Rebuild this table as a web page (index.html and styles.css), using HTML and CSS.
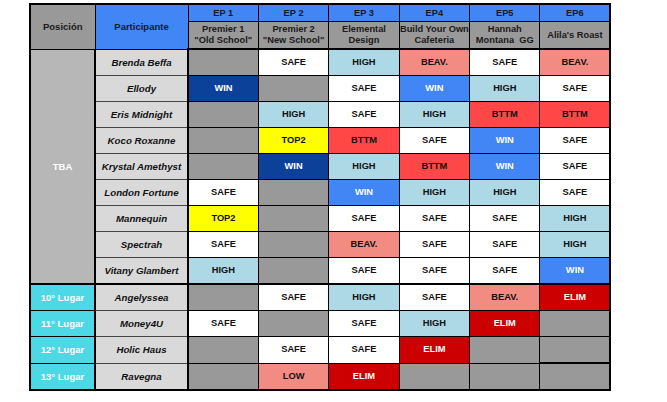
FILE: index.html
```html
<!DOCTYPE html>
<html lang="es">
<head>
<meta charset="utf-8">
<title>Tabla de progreso</title>
<link rel="stylesheet" href="styles.css">
</head>
<body>
<div class="wrap">
<table class="prog">
  <colgroup>
    <col class="c-pos"><col class="c-part"><col class="c-ep"><col class="c-ep"><col class="c-ep"><col class="c-ep"><col class="c-ep"><col class="c-ep">
  </colgroup>
  <thead>
    <tr class="h1">
      <th class="hpos" rowspan="2">Posición</th>
      <th class="hpart" rowspan="2">Participante</th>
      <th class="hep">EP 1</th>
      <th class="hep">EP 2</th>
      <th class="hep">EP 3</th>
      <th class="hep">EP4</th>
      <th class="hep">EP5</th>
      <th class="hep">EP6</th>
    </tr>
    <tr class="h2">
      <th class="htitle">Premier 1<br>"Old School"</th>
      <th class="htitle">Premier 2<br>"New School"</th>
      <th class="htitle">Elemental<br>Design</th>
      <th class="htitle">Build Your Own<br>Cafeteria</th>
      <th class="htitle">Hannah<br>Montana&nbsp; GG</th>
      <th class="htitle">Alila's Roast</th>
    </tr>
  </thead>
  <tbody>
    <tr>
      <td class="tba" rowspan="9">TBA</td>
      <td class="name">Brenda Beffa</td>
      <td class="na"></td><td class="safe">SAFE</td><td class="high">HIGH</td><td class="beav">BEAV.</td><td class="safe">SAFE</td><td class="beav">BEAV.</td>
    </tr>
    <tr>
      <td class="name">Ellody</td>
      <td class="win1">WIN</td><td class="na"></td><td class="safe">SAFE</td><td class="win">WIN</td><td class="high">HIGH</td><td class="safe">SAFE</td>
    </tr>
    <tr>
      <td class="name">Eris Midnight</td>
      <td class="na"></td><td class="high">HIGH</td><td class="safe">SAFE</td><td class="high">HIGH</td><td class="bttm">BTTM</td><td class="bttm">BTTM</td>
    </tr>
    <tr>
      <td class="name">Koco Roxanne</td>
      <td class="na"></td><td class="top2">TOP2</td><td class="bttm">BTTM</td><td class="safe">SAFE</td><td class="win">WIN</td><td class="safe">SAFE</td>
    </tr>
    <tr>
      <td class="name">Krystal Amethyst</td>
      <td class="na"></td><td class="win1">WIN</td><td class="high">HIGH</td><td class="bttm">BTTM</td><td class="win">WIN</td><td class="safe">SAFE</td>
    </tr>
    <tr>
      <td class="name">London Fortune</td>
      <td class="safe">SAFE</td><td class="na"></td><td class="win">WIN</td><td class="high">HIGH</td><td class="high">HIGH</td><td class="safe">SAFE</td>
    </tr>
    <tr>
      <td class="name">Mannequin</td>
      <td class="top2">TOP2</td><td class="na"></td><td class="safe">SAFE</td><td class="safe">SAFE</td><td class="safe">SAFE</td><td class="high">HIGH</td>
    </tr>
    <tr>
      <td class="name">Spectrah</td>
      <td class="safe">SAFE</td><td class="na"></td><td class="beav">BEAV.</td><td class="safe">SAFE</td><td class="safe">SAFE</td><td class="high">HIGH</td>
    </tr>
    <tr>
      <td class="name">Vitany Glambert</td>
      <td class="high">HIGH</td><td class="na"></td><td class="safe">SAFE</td><td class="safe">SAFE</td><td class="safe">SAFE</td><td class="win">WIN</td>
    </tr>
    <tr class="sep">
      <td class="place">10° Lugar</td>
      <td class="name">Angelyssea</td>
      <td class="na"></td><td class="safe">SAFE</td><td class="high">HIGH</td><td class="safe">SAFE</td><td class="beav">BEAV.</td><td class="elim">ELIM</td>
    </tr>
    <tr>
      <td class="place">11° Lugar</td>
      <td class="name">Money4U</td>
      <td class="safe">SAFE</td><td class="na"></td><td class="safe">SAFE</td><td class="high">HIGH</td><td class="elim">ELIM</td><td class="na"></td>
    </tr>
    <tr>
      <td class="place">12° Lugar</td>
      <td class="name">Holic Haus</td>
      <td class="na"></td><td class="safe">SAFE</td><td class="safe">SAFE</td><td class="elim">ELIM</td><td class="na"></td><td class="na thick-b"></td>
    </tr>
    <tr>
      <td class="place">13° Lugar</td>
      <td class="name">Ravegna</td>
      <td class="na"></td><td class="low">LOW</td><td class="elim">ELIM</td><td class="na"></td><td class="na"></td><td class="na"></td>
    </tr>
  </tbody>
</table>
</div>
</body>
</html>
```

FILE: styles.css
```css
html, body {
  margin: 0;
  padding: 0;
  background: #ffffff;
}

.wrap {
  padding: 3px 0 0 29px;
}

.prog {
  border-collapse: collapse;
  table-layout: fixed;
  border: 2px solid #000;
  font-family: "Liberation Sans", Arial, sans-serif;
  font-weight: bold;
  font-size: 9.3px;
  color: #111;
}

.c-pos { width: 65px; }
.c-part { width: 93px; }
.c-ep { width: 70.4px; }

.prog th,
.prog td {
  padding: 0;
  text-align: center;
  vertical-align: middle;
  border: 1px solid #000;
  line-height: 11px;
}

.h1 th.hep {
  height: 16px;
  background: #4285f4;
  border-bottom: 1px dotted #000;
  color: #1a1a1a;
}

.h2 th {
  height: 26px;
  background: #999999;
  color: #1a1a1a;
  border-bottom: 2px solid #000;
}

.hpos {
  background: #999999;
  border-right: 2px solid #000;
  border-bottom: 2px solid #000;
  color: #1a1a1a;
  font-size: 9.5px;
}

.hpart {
  background: #4285f4;
  border-right: 2px solid #000;
  border-bottom: 2px solid #000;
  color: #1a1a1a;
  font-size: 9.5px;
}

.prog tbody td {
  height: 25px;
}

.tba {
  background: #b7b7b7;
  color: #fff;
  border-right: 2px solid #000;
  font-size: 9.5px;
}

.place {
  background: #4dd8e6;
  color: #fff;
  border-right: 2px solid #000;
  border-bottom: 2px solid #000;
  font-size: 9.5px;
}

.prog td.name {
  background: #d9d9d9;
  font-style: italic;
  font-size: 9.7px;
  color: #111;
  border-top: 1px solid #444;
  border-bottom: 1px solid #444;
  border-left: 2px solid #000;
  border-right: 2px solid #000;
}

.sep td {
  border-top: 2px solid #000 !important;
}

.prog td.thick-b {
  border-bottom: 2px solid #000;
}

.na { background: #999999; }
.safe { background: #ffffff; }
.high { background: #add8e6; }
.beav { background: #f28b82; }
.low { background: #f28b82; }
.bttm { background: #ff4747; }
.top2 { background: #ffff00; }
.win { background: #4285f4; color: #fff; }
.win1 { background: #0c419a; color: #fff; }
.elim { background: #cc0000; color: #fff; }
```
